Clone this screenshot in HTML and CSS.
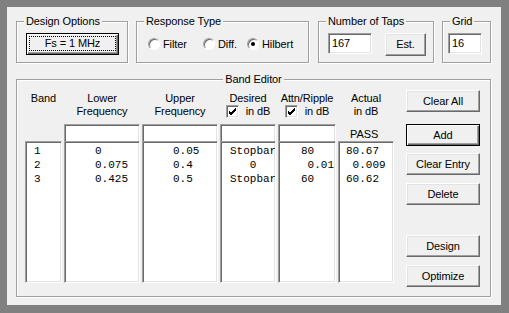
FILE: index.html
```html
<!DOCTYPE html>
<html lang="en">
  <head>
    <meta charset="UTF-8" />
    <title>FIR Design</title>
    <link rel="stylesheet" href="styles.css">
  </head>
  <body>
    <div class="panel">
      <!-- top settings -->
      <div class="top-row">
        <fieldset class="group group-design">
          <legend>Design Options</legend>
          <button class="btn btn-default btn-fs"><span class="focus">Fs = 1 MHz</span></button>
        </fieldset>

        <fieldset class="group group-response">
          <legend>Response Type</legend>
          <div class="radios">
            <label class="radio radio-filter"><span class="radio-dot"></span>Filter</label>
            <label class="radio radio-diff"><span class="radio-dot"></span>Diff.</label>
            <label class="radio"><span class="radio-dot checked"></span>Hilbert</label>
          </div>
        </fieldset>

        <fieldset class="group group-taps">
          <legend>Number of Taps</legend>
          <div class="taps-row">
            <div class="field field-taps">167</div>
            <button class="btn btn-est">Est.</button>
          </div>
        </fieldset>

        <fieldset class="group group-grid">
          <legend>Grid</legend>
          <div class="field field-grid">16</div>
        </fieldset>
      </div>

      <!-- band editor -->
      <fieldset class="group group-band">
        <legend>Band Editor</legend>
        <div class="band-body">
          <div class="band-grid">
            <div class="head">Band</div>
            <div class="head">Lower<br>Frequency</div>
            <div class="head">Upper<br>Frequency</div>
            <div class="head">Desired<div class="head-check"><span class="check"><svg width="9" height="9" viewBox="0 0 9 9"><path d="M1 4 L3 6 L8 1 M1 5 L3 7 L8 2 M1 6 L3 8 L8 3" fill="none" stroke="#000" stroke-width="1"/></svg></span>in dB</div></div>
            <div class="head">Attn/Ripple<div class="head-check"><span class="check"><svg width="9" height="9" viewBox="0 0 9 9"><path d="M1 4 L3 6 L8 1 M1 5 L3 7 L8 2 M1 6 L3 8 L8 3" fill="none" stroke="#000" stroke-width="1"/></svg></span>in dB</div></div>
            <div class="head">Actual<br>in dB</div>

            <div class="entry entry-empty"></div>
            <div class="entry field"></div>
            <div class="entry field"></div>
            <div class="entry field"></div>
            <div class="entry field"></div>
            <div class="entry entry-pass">PASS</div>

            <div class="list list-band">1
2
3</div>
            <div class="list list-freq">0
0.075
0.425</div>
            <div class="list list-freq">0.05
0.4
0.5</div>
            <div class="list list-desired">Stopbar
   0
Stopbar</div>
            <div class="list list-attn">80
 0.01
60</div>
            <div class="list list-actual">80.67
 0.009
60.62</div>
          </div>

          <div class="band-buttons">
            <button class="btn btn-clear-all">Clear All</button>
            <button class="btn btn-default btn-add">Add</button>
            <button class="btn btn-clear-entry">Clear Entry</button>
            <button class="btn btn-delete">Delete</button>
            <button class="btn btn-design">Design</button>
            <button class="btn btn-optimize">Optimize</button>
          </div>
        </div>
      </fieldset>
    </div>
  </body>
</html>
```

FILE: styles.css
```css
body {
  margin: 0;
  background-color: #808080;
  color: #000;
  font: 11px/13px 'Liberation Sans', Arial, sans-serif;
  letter-spacing: -0.1px;
}

.panel {
  width: 494px;
  height: 298px;
  margin: 7px 8px 8px 7px;
  padding: 8px 10px 8px 9px;
  box-sizing: border-box;
  background-color: #f0f0f0;
}

/* group boxes */
.group {
  margin: 0;
  padding: 0;
  min-width: 0;
  box-sizing: border-box;
  border: 1px solid #a0a0a0;
  box-shadow: inset 1px 1px 0 #fff, 1px 1px 0 #fff;
}

.group > legend {
  margin-left: 7px;
  padding: 0 2px;
  line-height: 13px;
  background-color: #f0f0f0;
}

.top-row {
  display: flex;
  height: 48px;
}

.group-design {
  width: 112px;
}

.group-response {
  width: 173px;
  margin-left: 8px;
}

.group-taps {
  width: 116px;
  margin-left: 9px;
}

.group-grid {
  width: 49px;
  margin-left: 8px;
}

/* buttons */
.btn {
  display: flex;
  align-items: center;
  justify-content: center;
  padding: 0;
  font: inherit;
  letter-spacing: inherit;
  color: #000;
  background-color: #f0f0f0;
  border: 1px solid;
  border-color: #fff #696969 #696969 #fff;
  box-shadow: inset -1px -1px 0 #a0a0a0, inset 1px 1px 0 #e3e3e3;
  box-sizing: border-box;
}

.btn-default {
  border-color: #000;
  box-shadow: inset 1px 1px 0 #fff, inset -1px -1px 0 #696969, inset -2px -2px 0 #a0a0a0;
}

.btn-fs {
  width: 93px;
  height: 22px;
  margin: 5px 0 0 9px;
  align-items: stretch;
}

.btn-fs > .focus {
  flex: 1;
  margin: 2px 2px 3px 2px;
  border: 1px dotted #000;
  display: flex;
  align-items: center;
  justify-content: center;
}

/* sunken fields */
.field {
  box-sizing: border-box;
  background-color: #fff;
  border: 1px solid;
  border-color: #a0a0a0 #fff #fff #a0a0a0;
  box-shadow: inset 1px 1px 0 #696969, inset -1px -1px 0 #e3e3e3;
  padding: 3px 0 0 3px;
}

/* response type */
.radios {
  display: flex;
  align-items: center;
  margin: 10px 0 0 11px;
  height: 12px;
}

.radio {
  display: flex;
  align-items: center;
}

.radio-filter {
  width: 55px;
}

.radio-diff {
  width: 44px;
}

.radio-dot {
  position: relative;
  width: 12px;
  height: 12px;
  margin-right: 3px;
  box-sizing: border-box;
  border-radius: 50%;
  border: 1px solid;
  border-color: #a0a0a0 #fff #fff #a0a0a0;
  background-color: #fff;
  box-shadow: inset 1px 1px 0 #696969;
}

.radio-dot.checked::after {
  content: '';
  position: absolute;
  top: 3px;
  left: 3px;
  width: 4px;
  height: 4px;
  border-radius: 50%;
  background-color: #000;
}

/* taps / grid */
.taps-row {
  display: flex;
  margin: 5px 0 0 9px;
}

.field-taps {
  width: 44px;
  height: 21px;
}

.btn-est {
  width: 41px;
  height: 23px;
  margin-left: 13px;
}

.field-grid {
  width: 34px;
  height: 21px;
  margin: 5px 0 0 5px;
}

/* band editor */
.group-band {
  height: 224px;
  margin-top: 10px;
}

.group-band > legend {
  margin: 0 auto;
}

.band-body {
  display: flex;
  padding: 0 10px 0 8px;
}

.band-grid {
  display: grid;
  grid-template-columns: 37px 76px 76px 56px 58px 56px;
  grid-template-rows: 26px 19px 142px;
  column-gap: 2px;
  padding-top: 6px;
}

.head {
  text-align: center;
  white-space: nowrap;
}

.head-check {
  display: flex;
  justify-content: center;
  align-items: center;
  height: 13px;
}

.check {
  display: flex;
  align-items: center;
  justify-content: center;
  width: 13px;
  height: 13px;
  margin-right: 7px;
  box-sizing: border-box;
  background-color: #fff;
  border: 1px solid;
  border-color: #a0a0a0 #fff #fff #a0a0a0;
  box-shadow: inset 1px 1px 0 #696969, inset -1px -1px 0 #e3e3e3;
}

.entry {
  margin-top: 6px;
  height: 19px;
}

.entry-pass {
  padding: 4px 0 0 12px;
  box-sizing: border-box;
}

.list {
  margin-top: 4px;
  height: 142px;
  box-sizing: border-box;
  overflow: hidden;
  background-color: #fff;
  border: 1px solid;
  border-color: #a0a0a0 #fff #fff #a0a0a0;
  box-shadow: inset 1px 1px 0 #696969, inset -1px -1px 0 #e3e3e3;
  padding-top: 2px;
  font: 11px/14px 'Liberation Mono', 'Courier New', monospace;
  letter-spacing: 0;
  white-space: pre;
}

.list-band {
  padding-left: 8px;
}

.list-freq {
  padding-left: 30px;
}

.list-desired {
  padding-left: 9px;
}

.list-attn {
  padding-left: 22px;
}

.list-actual {
  padding-left: 7px;
}

.band-buttons {
  display: flex;
  flex-direction: column;
  width: 74px;
  margin-left: 12px;
  padding-top: 4px;
}

.band-buttons > .btn {
  height: 22px;
}

.btn-add {
  margin-top: 12px;
}

.btn-clear-entry {
  margin-top: 7px;
}

.btn-delete {
  margin-top: 8px;
}

.btn-design {
  margin-top: 30px;
}

.btn-optimize {
  margin-top: 8px;
}
```
